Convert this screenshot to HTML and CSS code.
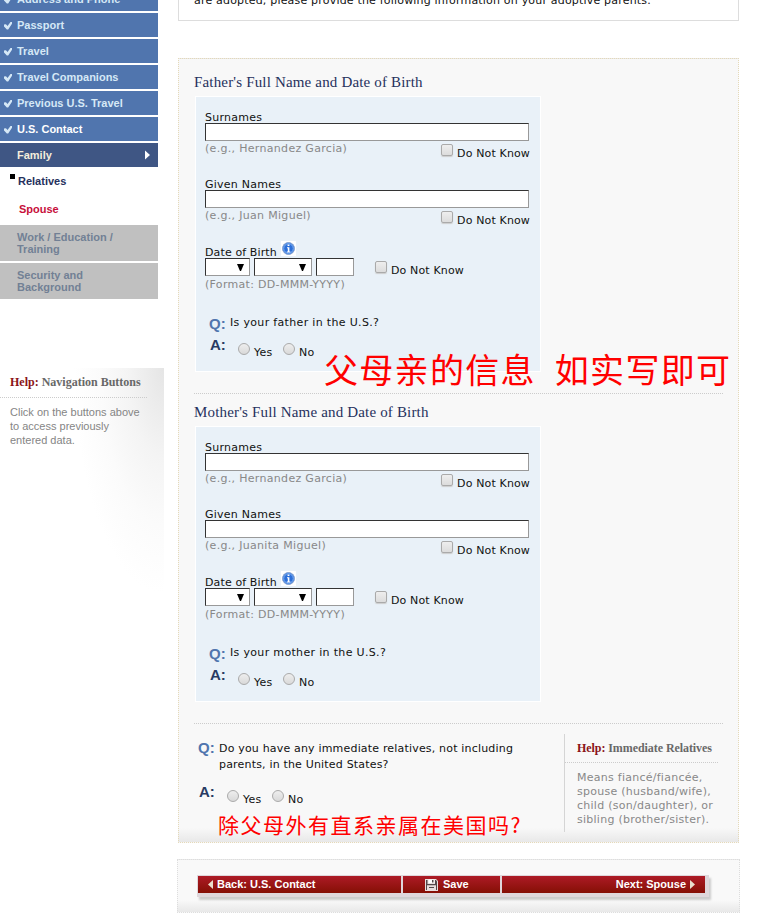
FILE: index.html
```html
<!DOCTYPE html>
<html lang="en">
<head>
<meta charset="utf-8">
<title>Family Information: Relatives</title>
<link rel="stylesheet" href="styles.css">
</head>
<body>
<div class="page">
  <aside class="sidebar">
    <nav class="nav">
      <a class="item first"><svg class="check" viewBox="0 0 9 9"><path d="M0 3.5L2.2 3L4 5.2L7.3 0.6H9V2.4L4.7 9H3.2L0 5.5Z"/></svg>Address and Phone</a>
      <a class="item"><svg class="check" viewBox="0 0 9 9"><path d="M0 3.5L2.2 3L4 5.2L7.3 0.6H9V2.4L4.7 9H3.2L0 5.5Z"/></svg>Passport</a>
      <a class="item"><svg class="check" viewBox="0 0 9 9"><path d="M0 3.5L2.2 3L4 5.2L7.3 0.6H9V2.4L4.7 9H3.2L0 5.5Z"/></svg>Travel</a>
      <a class="item"><svg class="check" viewBox="0 0 9 9"><path d="M0 3.5L2.2 3L4 5.2L7.3 0.6H9V2.4L4.7 9H3.2L0 5.5Z"/></svg>Travel Companions</a>
      <a class="item"><svg class="check" viewBox="0 0 9 9"><path d="M0 3.5L2.2 3L4 5.2L7.3 0.6H9V2.4L4.7 9H3.2L0 5.5Z"/></svg>Previous U.S. Travel</a>
      <a class="item visited"><svg class="check" viewBox="0 0 9 9"><path d="M0 3.5L2.2 3L4 5.2L7.3 0.6H9V2.4L4.7 9H3.2L0 5.5Z"/></svg>U.S. Contact</a>
      <a class="item current">Family<svg class="arrow" viewBox="0 0 5 9"><path d="M0 0L5 4.5L0 9Z"/></svg></a>
      <a class="sub here">Relatives</a>
      <a class="sub spouse">Spouse</a>
      <a class="item off">Work / Education /<br>Training</a>
      <a class="item off">Security and<br>Background</a>
    </nav>
    <section class="nav-help">
      <h4><b>Help:</b> Navigation Buttons</h4>
      <p>Click on the buttons above<br>to access previously<br>entered data.</p>
    </section>
  </aside>
  <main class="main">
    <div class="intro"><p>are adopted, please provide the following information on your adoptive parents.</p></div>
    <div class="panel">
      <section class="parent">
        <h3>Father's Full Name and Date of Birth</h3>
        <div class="card">
          <div class="field">
            <label>Surnames</label><div class="input"></div>
            <div class="under"><span class="hint">(e.g., Hernandez Garcia)</span><span class="dnk"><i class="box"></i>Do Not Know</span></div>
          </div>
          <div class="field">
            <label>Given Names</label><div class="input"></div>
            <div class="under"><span class="hint">(e.g., Juan Miguel)</span><span class="dnk"><i class="box"></i>Do Not Know</span></div>
          </div>
          <div class="dob">
            <div class="dob-label">Date of Birth<svg class="info" viewBox="0 0 15 15"><rect width="15" height="15" fill="#fff"/><circle cx="7.5" cy="7.5" r="6" fill="#2d6fd8" stroke="#8ba5cf"/><circle cx="7.5" cy="7.5" r="4.8" fill="none" stroke="#7eb0f3"/><path d="M6 6.2H8.4V10.4H9.4V11.4H5.8V10.4H6.8V7.2H6ZM6.6 3.4H8.4V5H6.6Z" fill="#fff"/></svg></div>
            <div class="date"><div class="input day"><svg class="drop" viewBox="0 0 7 7"><path d="M0 0H7L4 7H3Z"/></svg></div><div class="input month"><svg class="drop" viewBox="0 0 7 7"><path d="M0 0H7L4 7H3Z"/></svg></div><div class="input year"></div><span class="dnk"><i class="box"></i>Do Not Know</span></div>
            <div class="hint">(Format: DD-MMM-YYYY)</div>
          </div>
          <div class="qa"><b class="q">Q:</b><span>Is your father in the U.S.?</span></div>
          <div class="ans"><b class="a">A:</b><span class="opt"><i class="radio"></i>Yes</span><span class="opt"><i class="radio"></i>No</span></div>
        </div>
        <div class="note big">父母亲的信息<span class="space"></span>如实写即可</div>
      </section>
      <section class="parent">
        <h3>Mother's Full Name and Date of Birth</h3>
        <div class="card">
          <div class="field">
            <label>Surnames</label><div class="input"></div>
            <div class="under"><span class="hint">(e.g., Hernandez Garcia)</span><span class="dnk"><i class="box"></i>Do Not Know</span></div>
          </div>
          <div class="field">
            <label>Given Names</label><div class="input"></div>
            <div class="under"><span class="hint">(e.g., Juanita Miguel)</span><span class="dnk"><i class="box"></i>Do Not Know</span></div>
          </div>
          <div class="dob">
            <div class="dob-label">Date of Birth<svg class="info" viewBox="0 0 15 15"><rect width="15" height="15" fill="#fff"/><circle cx="7.5" cy="7.5" r="6" fill="#2d6fd8" stroke="#8ba5cf"/><circle cx="7.5" cy="7.5" r="4.8" fill="none" stroke="#7eb0f3"/><path d="M6 6.2H8.4V10.4H9.4V11.4H5.8V10.4H6.8V7.2H6ZM6.6 3.4H8.4V5H6.6Z" fill="#fff"/></svg></div>
            <div class="date"><div class="input day"><svg class="drop" viewBox="0 0 7 7"><path d="M0 0H7L4 7H3Z"/></svg></div><div class="input month"><svg class="drop" viewBox="0 0 7 7"><path d="M0 0H7L4 7H3Z"/></svg></div><div class="input year"></div><span class="dnk"><i class="box"></i>Do Not Know</span></div>
            <div class="hint">(Format: DD-MMM-YYYY)</div>
          </div>
          <div class="qa"><b class="q">Q:</b><span>Is your mother in the U.S.?</span></div>
          <div class="ans"><b class="a">A:</b><span class="opt"><i class="radio"></i>Yes</span><span class="opt"><i class="radio"></i>No</span></div>
        </div>
      </section>
      <section class="relatives">
        <div class="question">
          <div class="qa"><b class="q">Q:</b><span>Do you have any immediate relatives, not including<br>parents, in the United States?</span></div>
          <div class="ans"><b class="a">A:</b><span class="opt"><i class="radio"></i>Yes</span><span class="opt"><i class="radio"></i>No</span></div>
          <div class="note small">除父母外有直系亲属在美国吗?</div>
        </div>
        <div class="help">
          <h4><b>Help:</b> Immediate Relatives</h4>
          <p>Means fiancé/fiancée,<br>spouse (husband/wife),<br>child (son/daughter), or<br>sibling (brother/sister).</p>
        </div>
      </section>
    </div>
    <div class="actions">
      <div class="buttons">
        <a class="btn back"><svg class="tri" viewBox="0 0 5 9"><path d="M5 0V9L0 4.5Z"/></svg>Back: U.S. Contact</a>
        <a class="btn save"><svg class="disk" viewBox="0 0 13 12"><path d="M0 0H11L13 2V12H0Z" fill="#e8dede"/><path d="M1 1H2.5V5H10V1H11L12 2.5V11H11V6.2H2V11H1Z" fill="#54484a"/><path d="M3.5 0.5H9.5V4H3.5Z" fill="#fff"/><path d="M7 1H8.5V3.5H7ZM4 8H9V9H4Z" fill="#54484a"/></svg>Save</a>
        <a class="btn next">Next: Spouse<svg class="tri" viewBox="0 0 5 9"><path d="M0 0L5 4.5L0 9Z"/></svg></a>
      </div>
    </div>
  </main>
</div>
</body>
</html>
```
FILE: styles.css
```css
* { box-sizing: border-box; }
body { margin: 0; background: #fff; color: #111; font: 11px/12px "DejaVu Sans", sans-serif; }
h3, h4, p { margin: 0; font-weight: normal; }
.page { display: flex; height: 920px; overflow: hidden; white-space: nowrap; }

.sidebar { width: 164px; margin-right: 14px; font-family: "Liberation Sans", sans-serif; }
.nav { display: flex; flex-direction: column; width: 158px; height: 299px; font-weight: bold; }
.item { display: flex; flex-shrink: 0; align-items: center; position: relative; height: 24px; margin-bottom: 2px; padding-left: 17px; background: #5075ae; color: #d5e8f6; }
.item.first { margin-top: -13px; }
.check { position: absolute; left: 4px; top: 8px; width: 8px; height: 9px; fill: #d5e8f6; }
.item.visited { color: #fff; }
.item.current { margin-bottom: 0; background: #3f5684; color: #f3eddc; }
.arrow { position: absolute; left: 145px; top: 7px; width: 5px; height: 10px; fill: #fff; }
.sub { flex-shrink: 0; height: 28px; line-height: 28px; padding-left: 18px; color: #26315d; }
.here { position: relative; }
.here::before { content: ""; position: absolute; left: 10px; top: 7px; width: 5px; height: 5px; background: #000; }
.sub.spouse { height: 30px; padding-left: 19px; color: #c70f3b; }
.item.off { height: 36px; background: #c0c0c0; color: #728095; }
.nav-help { margin-top: 69px; height: 240px; background: radial-gradient(ellipse 90px 225px at 100% 0, #e5e5e5, #f4f4f4 40%, #fbfbfb 70%, #fff); color: #858585; }
h4 { font: bold 12px/14px "Liberation Serif", serif; color: #686868; }
h4 b { color: #8a1418; }
.nav-help h4 { width: 147px; height: 30px; padding: 7px 0 0 10px; border-bottom: 1px dotted #ccc; }
.nav-help p { padding: 7px 0 0 10px; line-height: 14px; }

.main { width: 561px; }
.intro { display: flow-root; height: 21px; border: 1px solid #ddd; border-top: 0; padding-left: 15px; letter-spacing: 0.19px; }
.intro p { margin-top: -5px; }
.panel { margin-top: 37px; height: 785px; border: 1px dotted #e5d9b8; padding: 0 15px; background: linear-gradient(to top, #e8e8e8, #f8f8f8 14px); }
.parent { position: relative; height: 330px; border-bottom: 1px dotted #ccc; padding-top: 9px; }
.parent:first-child { height: 335px; padding-top: 14px; }
h3 { height: 23px; font: 15px/18px "Liberation Serif", serif; letter-spacing: 0.17px; color: #26315d; }
.card { width: 346px; height: 276px; margin-left: 1px; padding: 14px 9px 0; border: 1px solid #fff; background: #e9f1f8; }
.field { height: 67px; }
label { display: block; height: 12px; line-height: 14px; letter-spacing: 0.25px; }
.input { width: 324px; height: 18px; border: 1px solid #999; border-top-color: #333; border-left-color: #333; background: #fff; }
.under { display: flex; justify-content: space-between; width: 325px; padding-top: 2px; }
.hint { color: #888; letter-spacing: 0.31px; }
.dnk { display: flex; gap: 4px; padding-top: 5px; letter-spacing: 0.14px; }
.box { width: 12px; height: 12px; margin-top: -4px; border: 1px solid #aaa; border-radius: 2px; background: linear-gradient(#eee, #dcdcdc); box-shadow: 0 1px 1px #ccc; }
.dob { height: 73px; margin-top: -4px; }
.dob-label { display: flex; height: 17px; line-height: 24px; letter-spacing: 0.12px; }
.info { width: 15px; height: 15px; margin-left: 4px; }
.date { display: flex; gap: 4px; height: 18px; }
.date + .hint { padding-top: 3px; }
.date .dnk { margin-left: 17px; padding-top: 7px; }
.day { width: 45px; }
.month { width: 58px; }
.year { width: 38px; }
.day, .month { display: flex; align-items: center; justify-content: flex-end; padding-right: 5px; }
.drop { width: 7px; height: 7px; fill: #000; }
.qa { display: flex; }
.q, .a { width: 21px; font: bold 15px/18px "Liberation Sans", sans-serif; color: #5075ae; }
.a { width: 28px; color: #283b62; }
.card .qa { height: 22px; padding-left: 4px; letter-spacing: 0.33px; }
.card .q { padding-top: 1px; letter-spacing: 0; }
.card .qa span { padding-top: 3px; }
.ans { display: flex; height: 22px; }
.card .ans { padding-left: 5px; }
.opt { display: flex; gap: 4px; width: 45px; padding-top: 11px; letter-spacing: 0.2px; }
.radio { width: 12px; height: 12px; margin-top: -4px; border: 1px solid #aaa; border-radius: 50%; background: linear-gradient(#eee, #d9d9d9); }
.note { position: absolute; color: red; font-family: "Noto Sans CJK SC", sans-serif; }
.big { left: 130px; top: 287px; z-index: 1; display: flex; font-size: 34px; line-height: 46px; letter-spacing: 1.3px; }
.space { width: 19px; }
.relatives { display: flex; height: 118px; padding-top: 10px; }
.question { position: relative; width: 370px; padding: 5px 0 0 4px; }
.question .qa { height: 44px; line-height: 16px; letter-spacing: 0.18px; }
.question .qa span { padding-top: 2px; }
.question .ans { padding-left: 1px; }
.small { left: 24px; top: 75px; font-size: 21px; line-height: 30px; letter-spacing: 1.5px; }
.help { height: 98px; width: 154px; border-left: 1px solid #d5d5d5; color: #888; }
.help h4 { height: 29px; padding: 7px 0 0 12px; border-bottom: 1px dotted #ccc; letter-spacing: -0.07px; }
.help p { padding: 8px 0 0 12px; line-height: 14px; letter-spacing: 0.26px; }

.actions { height: 54px; margin: 16px 0 0 -1px; width: 563px; border: 1px dotted #ddd; padding: 15px 0 0 19px; background: linear-gradient(to top, #e8e8e8, #f9f9f9 12px); }
.buttons { display: flex; gap: 2px; width: 512px; height: 22px; padding: 1px 4px 4px 1px; background: #dfd7db; box-shadow: 2px 3px 2px #ccc; }
.btn { display: flex; align-items: center; height: 17px; background: linear-gradient(#ad1b26, #850f05); color: #fff; font: bold 11px/17px "Liberation Sans", sans-serif; }
.tri { width: 5px; height: 9px; fill: #eadfce; }
.back { width: 203px; padding-left: 10px; gap: 4px; }
.save { width: 97px; padding-left: 22px; gap: 5px; }
.next { width: 203px; justify-content: flex-end; gap: 4px; padding-right: 10px; }
.disk { width: 13px; height: 12px; }
```
